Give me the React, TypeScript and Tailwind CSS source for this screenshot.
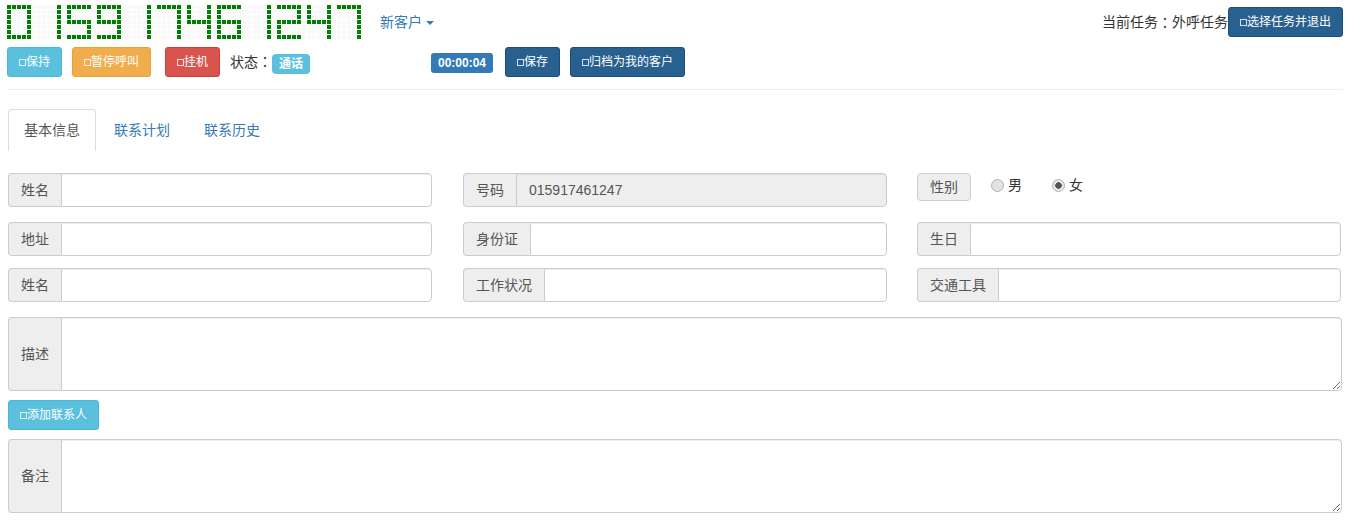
import type { ReactNode } from "react";
import "react";

const FONT = { fontFamily: '"Liberation Sans", "Noto Sans CJK SC", sans-serif' };

// 5x7 dot patterns for the number display
const DIGITS: Record<string, string[]> = {
  "0": ["11111", "10001", "10001", "10001", "10001", "10001", "11111"],
  "1": ["00001", "00001", "00001", "00001", "00001", "00001", "00001"],
  "2": ["11111", "00001", "00001", "11111", "10000", "10000", "11111"],
  "4": ["10001", "10001", "10001", "11111", "00001", "00001", "00001"],
  "5": ["11111", "10000", "10000", "11111", "00001", "00001", "11111"],
  "6": ["11111", "10000", "10000", "11111", "10001", "10001", "11111"],
  "7": ["11111", "00001", "00001", "00001", "00001", "00001", "00001"],
  "9": ["11111", "10001", "10001", "11111", "00001", "00001", "11111"],
};

function DotDisplay({ value }: { value: string }) {
  const cells: boolean[] = [];
  for (let row = 0; row < 7; row++) {
    value.split("").forEach((d, i) => {
      if (i > 0) cells.push(false);
      DIGITS[d][row].split("").forEach((c) => cells.push(c === "1"));
    });
  }
  return (
    <div className="grid grid-cols-[repeat(71,4px)] gap-[1px]" aria-label={value}>
      {cells.map((on, i) => (
        <div key={i} className={on ? "h-[4px] bg-[#008000]" : "h-[4px] bg-[#f9f9f9]"} />
      ))}
    </div>
  );
}

function Btn({ className, children }: { className: string; children: ReactNode }) {
  return (
    <button className={`flex h-[30px] items-center rounded-[3px] border pl-[11px] text-[12px] text-white ${className}`}>
      <span className="h-[7px] w-[7px] border border-white/80" />
      {children}
    </button>
  );
}

function Field({ label, value, disabled }: { label: string; value?: string; disabled?: boolean }) {
  return (
    <div className="flex h-[34px] w-[424px] text-[14px]">
      <span className="flex items-center whitespace-nowrap rounded-l-[4px] border border-r-0 border-[#ccc] bg-[#eee] px-[12px] text-[#555]">
        {label}
      </span>
      <input
        readOnly
        value={value ?? ""}
        className={`min-w-0 flex-1 rounded-r-[4px] border border-[#ccc] px-[12px] text-[14px] text-[#555] shadow-[inset_0_1px_1px_rgba(0,0,0,0.075)] ${disabled ? "bg-[#eee]" : "bg-white"}`}
      />
    </div>
  );
}

function AreaField({ label }: { label: string }) {
  return (
    <div className="flex h-[74px] w-[1334px] text-[14px]">
      <span className="flex items-center whitespace-nowrap rounded-l-[4px] border border-r-0 border-[#ccc] bg-[#eee] px-[12px] text-[#555]">
        {label}
      </span>
      <textarea className="min-w-0 flex-1 resize-y rounded-r-[4px] border border-[#ccc] bg-white shadow-[inset_0_1px_1px_rgba(0,0,0,0.075)]" />
    </div>
  );
}

function Radio({ label, checked }: { label: string; checked?: boolean }) {
  return (
    <label className="flex items-center text-[14px] text-[#333]">
      <input
        type="radio"
        name="gender"
        defaultChecked={checked}
        className="mr-[4px] h-[13px] w-[13px] appearance-none rounded-full border border-[#b0b0b0] bg-[#e2e2e2] checked:bg-[radial-gradient(circle,#555_0,#555_3px,#e8e8e8_3.5px)]"
      />
      {label}
    </label>
  );
}

// the full-width colon sits centred in the reference, as in the TC face
function Colon() {
  return <span className="font-['Noto_Sans_CJK_TC']">：</span>;
}

export default function App() {
  return (
    <div className="h-[524px] w-[1363px] overflow-hidden bg-white text-[14px] text-[#333]" style={FONT}>
      <div className="pl-[7px] pr-[20px] pt-[5px]">
        <div className="flex items-start">
          <DotDisplay value="015917461247" />
          <a className="ml-[19px] mt-[7px] flex h-[20px] items-center text-[#337ab7]">
            新客户
            <span className="ml-[4px] mt-[1px] h-0 w-0 border-x-[4px] border-t-[4px] border-x-transparent border-t-[#337ab7]" />
          </a>
          <span className="ml-auto mt-[7px] flex h-[20px] items-center">
            当前任务
            <Colon />
            外呼任务
          </span>
          <div className="mt-[2px]">
            <Btn className="w-[115px] border-[#204d74] bg-[#286090]">选择任务并退出</Btn>
          </div>
        </div>

        <div className="mt-[8px] flex items-start">
          <Btn className="w-[55px] border-[#46b8da] bg-[#5bc0de]">保持</Btn>
          <Btn className="ml-[10px] w-[79px] border-[#eea236] bg-[#f0ad4e]">暂停呼叫</Btn>
          <Btn className="ml-[14px] w-[55px] border-[#d43f3a] bg-[#d9534f]">挂机</Btn>
          <span className="ml-[10px] mt-[4px] w-[42px] whitespace-nowrap">
            状态
            <Colon />
          </span>
          <span className="mt-[7px] flex h-[20px] w-[38px] items-center justify-center rounded-[4px] bg-[#5bc0de] text-[12px] font-bold text-white">
            通话
          </span>
          <span className="ml-[121px] mt-[6px] flex h-[20px] w-[62px] items-center justify-center rounded-[3px] bg-[#337ab7] text-[12px] font-bold text-white">
            00:00:04
          </span>
          <Btn className="ml-[12px] w-[55px] border-[#204d74] bg-[#286090]">保存</Btn>
          <Btn className="ml-[10px] w-[115px] border-[#204d74] bg-[#286090]">归档为我的客户</Btn>
        </div>

        <div className="mt-[12px] border-t border-[#eee]" />
      </div>

      <div className="pl-[8px]">
        <div className="mt-[19px] flex h-[42px] items-stretch">
          <span className="flex w-[88px] items-center justify-center rounded-t-[4px] border border-b-0 border-[#ddd] text-[#555]">
            基本信息
          </span>
          <a className="ml-[18px] flex items-center text-[#337ab7]">联系计划</a>
          <a className="ml-[34px] flex items-center text-[#337ab7]">联系历史</a>
        </div>

        <div className="mt-[22px] grid grid-cols-[455px_454px_424px]">
          <Field label="姓名" />
          <Field label="号码" value="015917461247" disabled />
          <div className="flex items-start">
            <span className="flex h-[28px] w-[54px] items-center justify-center rounded-[4px] border border-[#ccc] bg-[#eee] text-[#555]">
              性别
            </span>
            <div className="ml-[20px] mt-[2px] flex gap-[30px]">
              <Radio label="男" />
              <Radio label="女" checked />
            </div>
          </div>
        </div>

        <div className="mt-[15px] grid grid-cols-[455px_454px_424px]">
          <Field label="地址" />
          <Field label="身份证" />
          <Field label="生日" />
        </div>

        <div className="mt-[12px] grid grid-cols-[455px_454px_424px]">
          <Field label="姓名" />
          <Field label="工作状况" />
          <Field label="交通工具" />
        </div>

        <div className="mt-[15px]">
          <AreaField label="描述" />
        </div>

        <div className="mt-[9px]">
          <Btn className="w-[91px] border-[#46b8da] bg-[#5bc0de]">添加联系人</Btn>
        </div>

        <div className="mt-[9px]">
          <AreaField label="备注" />
        </div>
      </div>
    </div>
  );
}
